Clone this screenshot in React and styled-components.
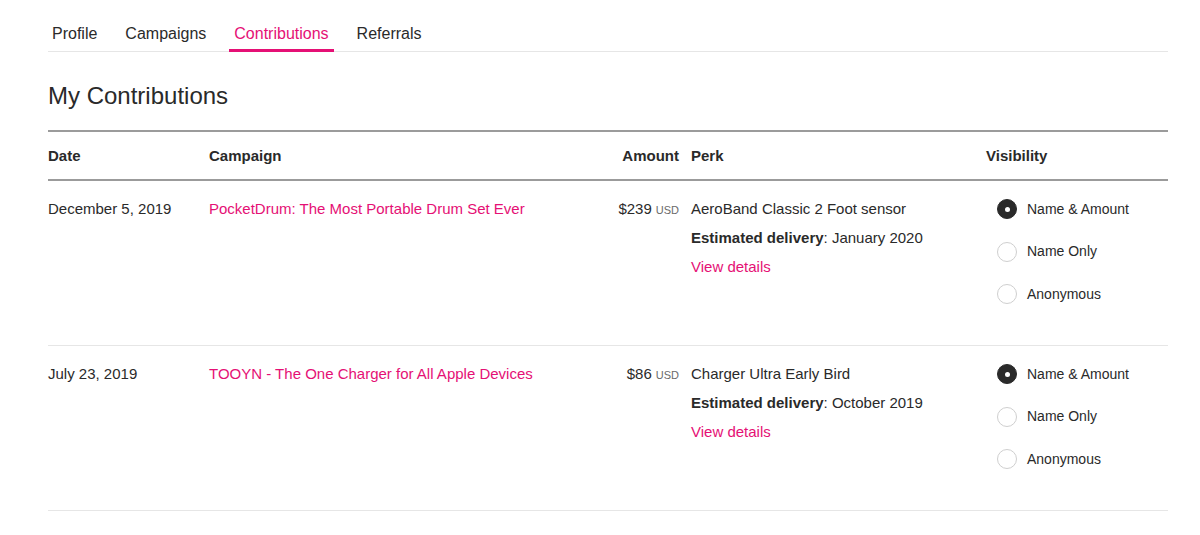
import React, { useState } from 'react'
import styled, { createGlobalStyle } from 'styled-components'

const GlobalStyle = createGlobalStyle`
  body {
    margin: 0;
    background: #fff;
    font-family: "Liberation Sans", Arial, sans-serif;
    color: #2a2a2a;
  }
`

const contributions = [
  {
    date: 'December 5, 2019',
    campaign: 'PocketDrum: The Most Portable Drum Set Ever',
    amount: '$239',
    perk: 'AeroBand Classic 2 Foot sensor',
    delivery: 'January 2020',
  },
  {
    date: 'July 23, 2019',
    campaign: 'TOOYN - The One Charger for All Apple Devices',
    amount: '$86',
    perk: 'Charger Ultra Early Bird',
    delivery: 'October 2019',
  },
]

const visibilityOptions = ['Name & Amount', 'Name Only', 'Anonymous']

const Page = styled.div`
  padding: 0 32px 0 48px;
`

const Tabs = styled.nav`
  display: flex;
  border-bottom: 1px solid #e6e6e6;
  height: 52px;
  padding-top: 10px;
  box-sizing: border-box;
`

const Tab = styled.a`
  font-size: 16px;
  padding: 15px 5px 0;
  margin-right: 18px;
  color: ${p => (p.$active ? '#e51075' : '#2a2a2a')};
  border-bottom: 3px solid ${p => (p.$active ? '#e51075' : 'transparent')};
  cursor: pointer;
  box-sizing: border-box;
  height: 42px;
  &:first-child {
    padding-left: 4px;
  }
`

const Title = styled.h1`
  font-size: 24px;
  font-weight: 400;
  margin: 31px 0 21px;
  line-height: 26px;
`

const Table = styled.div`
  border-top: 2px solid #9b9b9b;
`

const Row = styled.div`
  display: grid;
  grid-template-columns: 161px 330px 152px 295px 1fr;
  align-items: start;
  border-bottom: ${p => (p.$head ? '2px solid #9b9b9b' : '1px solid #e6e6e6')};
  padding: ${p => (p.$head ? '14px 0 14px' : '18px 0 41px')};
  font-size: 15px;
  line-height: 19px;
`

const HeadCell = styled.div`
  font-weight: 700;
  text-align: ${p => (p.$right ? 'right' : 'left')};
  padding-right: ${p => (p.$right ? '12px' : '0')};
`

const Cell = styled.div`
  line-height: 19px;
  text-align: ${p => (p.$right ? 'right' : 'left')};
  padding-right: ${p => (p.$right ? '12px' : '0')};
`

const PinkLink = styled.a`
  color: #e51075;
  cursor: pointer;
`

const Currency = styled.span`
  font-size: 11px;
  color: #6a6a6a;
  margin-left: 4px;
`

const PerkLines = styled.div`
  display: flex;
  flex-direction: column;
  gap: 10px;
`

const RadioGroup = styled.div`
  display: flex;
  flex-direction: column;
  gap: 22.5px;
  padding-left: 11px;
`

const RadioLabel = styled.label`
  display: flex;
  align-items: center;
  gap: 10px;
  font-size: 14px;
  cursor: pointer;
`

const RadioCircle = styled.span`
  width: 20px;
  height: 20px;
  border-radius: 50%;
  box-sizing: border-box;
  border: 1px solid ${p => (p.$checked ? '#2a2a2a' : '#cfcfcf')};
  background: ${p => (p.$checked ? '#2a2a2a' : '#fff')};
  display: flex;
  align-items: center;
  justify-content: center;
  &::after {
    content: '';
    width: 5px;
    height: 5px;
    border-radius: 50%;
    background: #fff;
    display: ${p => (p.$checked ? 'block' : 'none')};
  }
`

const Visibility = () => {
  const [value, setValue] = useState(visibilityOptions[0])
  return (
    <RadioGroup>
      {visibilityOptions.map(opt => (
        <RadioLabel key={opt} onClick={() => setValue(opt)}>
          <RadioCircle $checked={value === opt} />
          {opt}
        </RadioLabel>
      ))}
    </RadioGroup>
  )
}

export default function App() {
  return (
    <>
      <GlobalStyle />
      <Page>
        <Tabs>
          <Tab>Profile</Tab>
          <Tab>Campaigns</Tab>
          <Tab $active>Contributions</Tab>
          <Tab>Referrals</Tab>
        </Tabs>
        <Title>My Contributions</Title>
        <Table>
          <Row $head>
            <HeadCell>Date</HeadCell>
            <HeadCell>Campaign</HeadCell>
            <HeadCell $right>Amount</HeadCell>
            <HeadCell>Perk</HeadCell>
            <HeadCell>Visibility</HeadCell>
          </Row>
          {contributions.map(c => (
            <Row key={c.date}>
              <Cell>{c.date}</Cell>
              <Cell><PinkLink>{c.campaign}</PinkLink></Cell>
              <Cell $right>{c.amount}<Currency>USD</Currency></Cell>
              <PerkLines>
                <div>{c.perk}</div>
                <div><b>Estimated delivery</b>: {c.delivery}</div>
                <PinkLink>View details</PinkLink>
              </PerkLines>
              <Visibility />
            </Row>
          ))}
        </Table>
      </Page>
    </>
  )
}
